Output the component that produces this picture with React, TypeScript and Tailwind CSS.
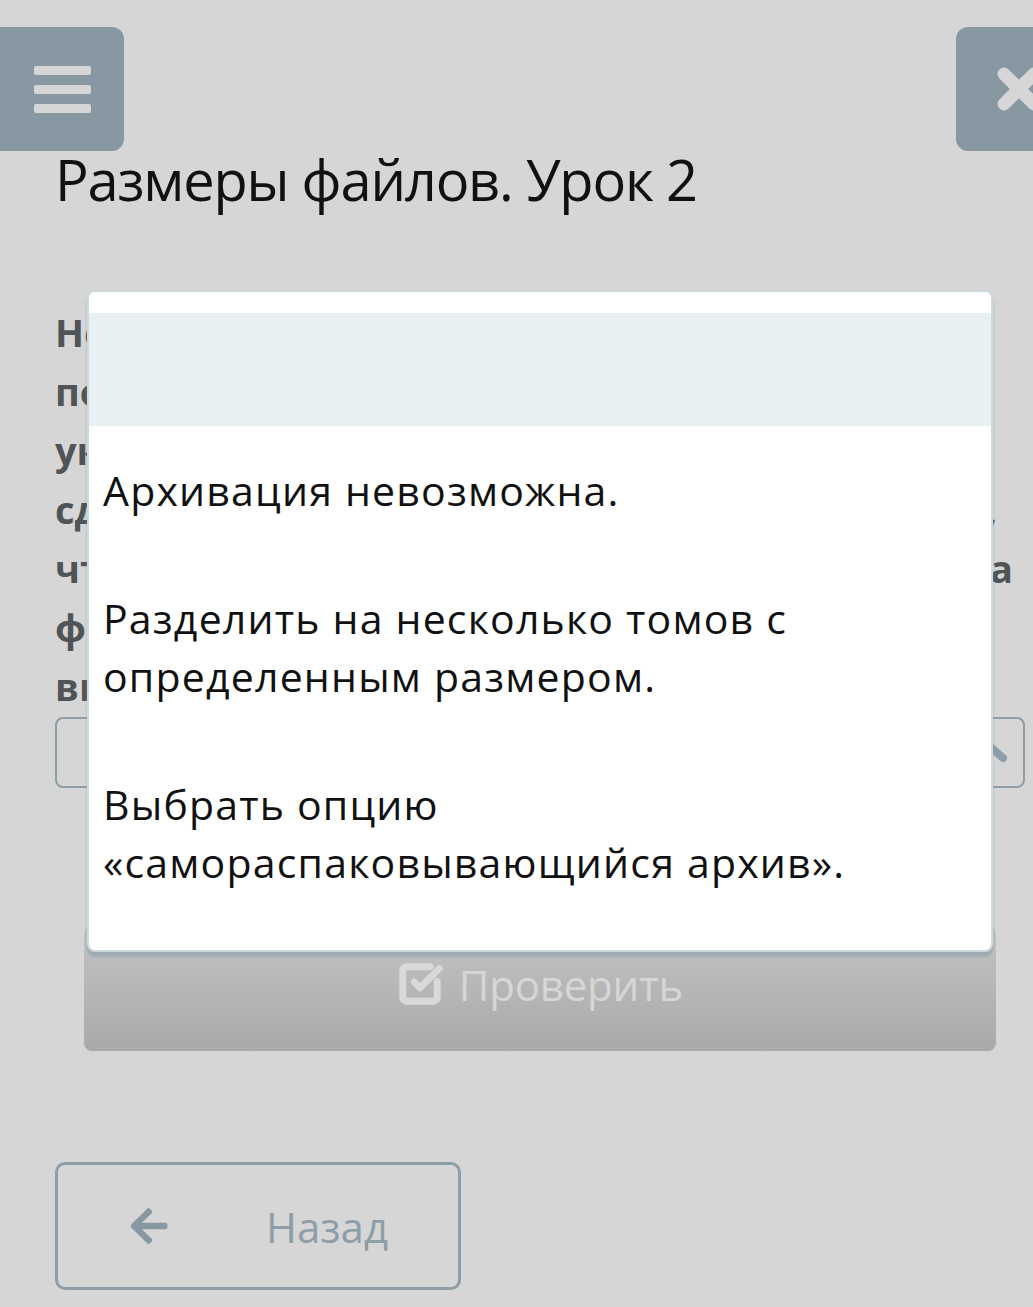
import { SquareCheckBig } from 'lucide-react';
import { FaArrowLeft } from 'react-icons/fa';

const questionLines = [
  { text: 'Необходимо отправить архив по почте,', justify: false },
  { text: 'почтовый сервис не принимает файлы', justify: false },
  { text: 'указанного размера. Что нужно', justify: false },
  { text: 'сделать при архивации файлов,', justify: true, pad: 'pr-[16px]' },
  { text: 'чтобы отправить архив? Выберите на', justify: true, pad: '' },
  { text: 'форме один правильный ответ', justify: false },
  { text: 'выпадающего списка.', justify: false },
];

const options = [
  ['Архивация невозможна.'],
  ['Разделить на несколько томов с', 'определенным размером.'],
  ['Выбрать опцию', '«самораспаковывающийся архив».'],
];

export default function App() {
  return (
    <div className="relative w-[1033px] h-[1307px] overflow-hidden bg-[#d6d6d6] font-['Open_Sans',sans-serif]">
      {/* top bar */}
      <div className="flex justify-between pt-[27px]">
        <div className="-ml-[14px] w-[138px] h-[124px] rounded-[12px] bg-[#8798a3] flex flex-col items-center justify-center gap-[10px] pl-[14px]">
          <div className="w-[57px] h-[9px] rounded-[2px] bg-[#d6d6d6]" />
          <div className="w-[57px] h-[9px] rounded-[2px] bg-[#d6d6d6]" />
          <div className="w-[57px] h-[9px] rounded-[2px] bg-[#d6d6d6]" />
        </div>
        <div className="-mr-[50px] w-[127px] h-[124px] rounded-[12px] bg-[#8798a3] flex items-center pl-[40px]">
          <svg width="46" height="46" viewBox="0 0 46 46">
            <path d="M8 8 L38 38 M38 8 L8 38" stroke="#d6d6d6" strokeWidth="13" strokeLinecap="round" />
          </svg>
        </div>
      </div>

      {/* title */}
      <h1 className="mt-[-2px] ml-[55px] text-[56px] leading-[60px] text-[#111] tracking-[-1.2px]">Размеры файлов. Урок 2</h1>

      {/* question */}
      <div className="mt-[94px] ml-[55px] w-[958px] text-[38px] leading-[59px] font-bold text-[#505456]">
        {questionLines.map((l, i) => (
          <div
            key={i}
            className={l.justify ? `whitespace-nowrap text-justify [text-align-last:justify] ${l.pad}` : 'whitespace-nowrap'}
          >
            {l.text}
          </div>
        ))}
      </div>

      {/* input */}
      <div className="mt-[1px] ml-[55px] w-[970px] h-[71px] rounded-[8px] border-[2px] border-[#8d9ea8] flex items-center justify-end pr-[14px]">
        <svg width="26" height="26" viewBox="0 0 26 26">
          <path d="M3 3 L20 18" stroke="#8d9ea8" strokeWidth="8" strokeLinecap="round" />
        </svg>
      </div>

      {/* check button */}
      <div className="mt-[138px] ml-[84px] w-[912px] h-[125px] rounded-[8px] bg-gradient-to-b from-[#c4c4c4] to-[#a9a9a9] flex items-center justify-center gap-[16px] pb-[9px]">
        <SquareCheckBig size={46} strokeWidth={3.6} color="#d9d9d9" />
        <span className="text-[42px] text-[#d6d6d6] tracking-[-0.2px]">Проверить</span>
      </div>

      {/* back button */}
      <div className="mt-[111px] ml-[55px] w-[406px] h-[128px] rounded-[10px] border-[3px] border-[#8d9ea8] flex items-center">
        <FaArrowLeft className="ml-[70px] text-[#8798a3]" size={42} />
        <span className="ml-[96px] text-[42px] text-[#8d9ea8]">Назад</span>
      </div>

      {/* dropdown overlay */}
      <div className="absolute left-[87px] top-[290px] w-[906px] h-[662px] rounded-[8px] border-[2px] border-[#cbdadd] bg-white shadow-[0_5px_3px_rgba(130,155,165,0.55)] overflow-hidden">
        <div className="h-[21px] bg-white" />
        <div className="h-[113px] bg-[#e9f0f3]" />
        {options.map((o, i) => (
          <div key={i} className="px-[14px] py-[35px] text-[41px] leading-[58px] tracking-[1.2px] text-[#111]">
            {o.map((line, j) => (
              <div key={j}>{line}</div>
            ))}
          </div>
        ))}
      </div>
    </div>
  );
}
